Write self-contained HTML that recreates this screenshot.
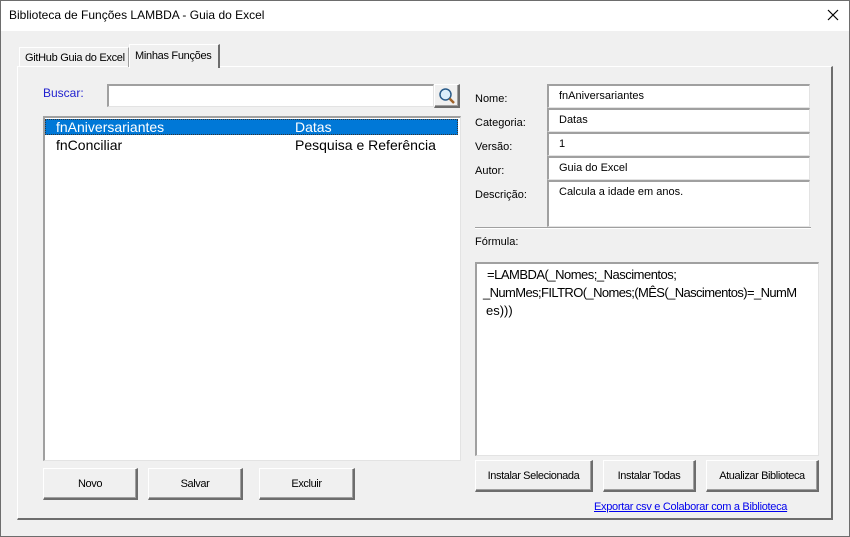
<!DOCTYPE html>
<html><head><meta charset="utf-8"><style>
*{box-sizing:border-box;margin:0;padding:0}
body{width:850px;height:537px;background:#f0f0f0;font-family:"Liberation Sans",sans-serif;font-size:11px;color:#000;position:relative;overflow:hidden}
.a{position:absolute;white-space:nowrap}
.win{left:0;top:0;width:850px;height:537px;border:1px solid #6d6d6d}
.title{left:1px;top:1px;width:848px;height:30px;background:#fff}
.tb{background:#fff;border-top:2px solid #a0a0a0;border-left:2px solid #a0a0a0;border-right:1px solid #e3e3e3;border-bottom:1px solid #e3e3e3}
.btn{background:#f0f0f0;border-top:1px solid #fff;border-left:1px solid #fff;border-right:2px solid #6d6d6d;border-bottom:2px solid #6d6d6d;box-shadow:inset -1px -1px 0 #a0a0a0;display:flex;align-items:center;justify-content:center;font-size:11px;letter-spacing:-0.4px}
.lbl{font-size:11px}
.fld{font-size:11px;padding:4px 0 0 10px}
</style></head><body>
<div class="a win"></div>
<div class="a title"></div>
<div class="a" style="left:9px;top:8px;font-size:12px">Biblioteca de Funções LAMBDA - Guia do Excel</div>
<svg class="a" style="left:827px;top:9px" width="12" height="12"><path d="M1 1L11 11M11 1L1 11" stroke="#000" stroke-width="1.2"/></svg>
<div class="a" style="left:17px;top:66px;width:816px;height:454px;border-top:1px solid #fff;border-left:1px solid #fff;border-right:2px solid #6d6d6d;border-bottom:2px solid #6d6d6d"></div>
<div class="a" style="left:19px;top:47px;width:110px;height:20px;border-top:1px solid #fff;border-left:1px solid #fff;border-right:1px solid #a0a0a0;font-size:11px;padding:4px 0 0 5px;letter-spacing:-0.3px">GitHub Guia do Excel</div>
<div class="a" style="left:129px;top:44px;width:91px;height:24px;background:#f0f0f0;border-top:1px solid #fff;border-left:1px solid #fff;border-right:2px solid #6d6d6d;font-size:11px;padding:5px 0 0 5px;letter-spacing:-0.3px">Minhas Funções</div>
<div class="a" style="left:43px;top:86px;color:#1f1fcf;font-size:12px">Buscar:</div>
<div class="a tb" style="left:107px;top:84px;width:327px;height:23px"></div>
<div class="a btn" style="left:434px;top:84px;width:26px;height:24px"><svg width="18" height="18"><circle cx="7.5" cy="7.5" r="5.5" fill="#dbeefb" stroke="#2a5c8a" stroke-width="1.5"/><path d="M11.5 11.5L16 16" stroke="#a0642a" stroke-width="2.5"/></svg></div>
<div class="a tb" style="left:43px;top:116px;width:418px;height:345px"></div>
<div class="a" style="left:45px;top:119px;width:413px;height:16px;background:#0078d7;border:1px dotted #333"></div>
<div class="a" style="left:56px;top:119px;color:#fff;font-size:14px">fnAniversariantes</div>
<div class="a" style="left:295px;top:119px;color:#fff;font-size:14px">Datas</div>
<div class="a" style="left:56px;top:137px;font-size:14px">fnConciliar</div>
<div class="a" style="left:295px;top:137px;font-size:14px">Pesquisa e Referência</div>
<div class="a btn" style="left:43px;top:468px;width:95px;height:32px">Novo</div>
<div class="a btn" style="left:148px;top:468px;width:95px;height:32px">Salvar</div>
<div class="a btn" style="left:259px;top:468px;width:96px;height:32px">Excluir</div>
<div class="a lbl" style="left:475px;top:93px">Nome:</div>
<div class="a lbl" style="left:475px;top:117px">Categoria:</div>
<div class="a lbl" style="left:475px;top:141px">Versão:</div>
<div class="a lbl" style="left:475px;top:165px">Autor:</div>
<div class="a lbl" style="left:475px;top:189px">Descrição:</div>
<div class="a tb fld" style="left:547px;top:84px;width:263px;height:24px">fnAniversariantes</div>
<div class="a tb fld" style="left:547px;top:108px;width:263px;height:24px">Datas</div>
<div class="a tb fld" style="left:547px;top:132px;width:263px;height:24px">1</div>
<div class="a tb fld" style="left:547px;top:156px;width:263px;height:24px">Guia do Excel</div>
<div class="a tb fld" style="left:547px;top:180px;width:263px;height:47px">Calcula a idade em anos.</div>
<div class="a" style="left:475px;top:227px;width:336px;height:2px;border-top:1px solid #a0a0a0;border-bottom:1px solid #fff"></div>
<div class="a lbl" style="left:475px;top:236px">Fórmula:</div>
<div class="a tb" style="left:475px;top:262px;width:344px;height:194px"></div>
<div class="a" style="left:487px;top:266px;font-size:13px;line-height:18px;letter-spacing:-0.5px">=LAMBDA(_Nomes;_Nascimentos;</div>
<div class="a" style="left:483px;top:284px;font-size:13px;line-height:18px;letter-spacing:-0.6px">_NumMes;FILTRO(_Nomes;(MÊS(_Nascimentos)=_NumM</div>
<div class="a" style="left:486px;top:302px;font-size:13px;line-height:18px">es)))</div>
<div class="a btn" style="left:475px;top:460px;width:118px;height:32px">Instalar Selecionada</div>
<div class="a btn" style="left:603px;top:460px;width:93px;height:32px">Instalar Todas</div>
<div class="a btn" style="left:706px;top:460px;width:113px;height:32px">Atualizar Biblioteca</div>
<div class="a" style="left:594px;top:501px;color:#0000ee;text-decoration:underline;font-size:11px;letter-spacing:-0.3px">Exportar csv e Colaborar com a Biblioteca</div>
</body></html>
